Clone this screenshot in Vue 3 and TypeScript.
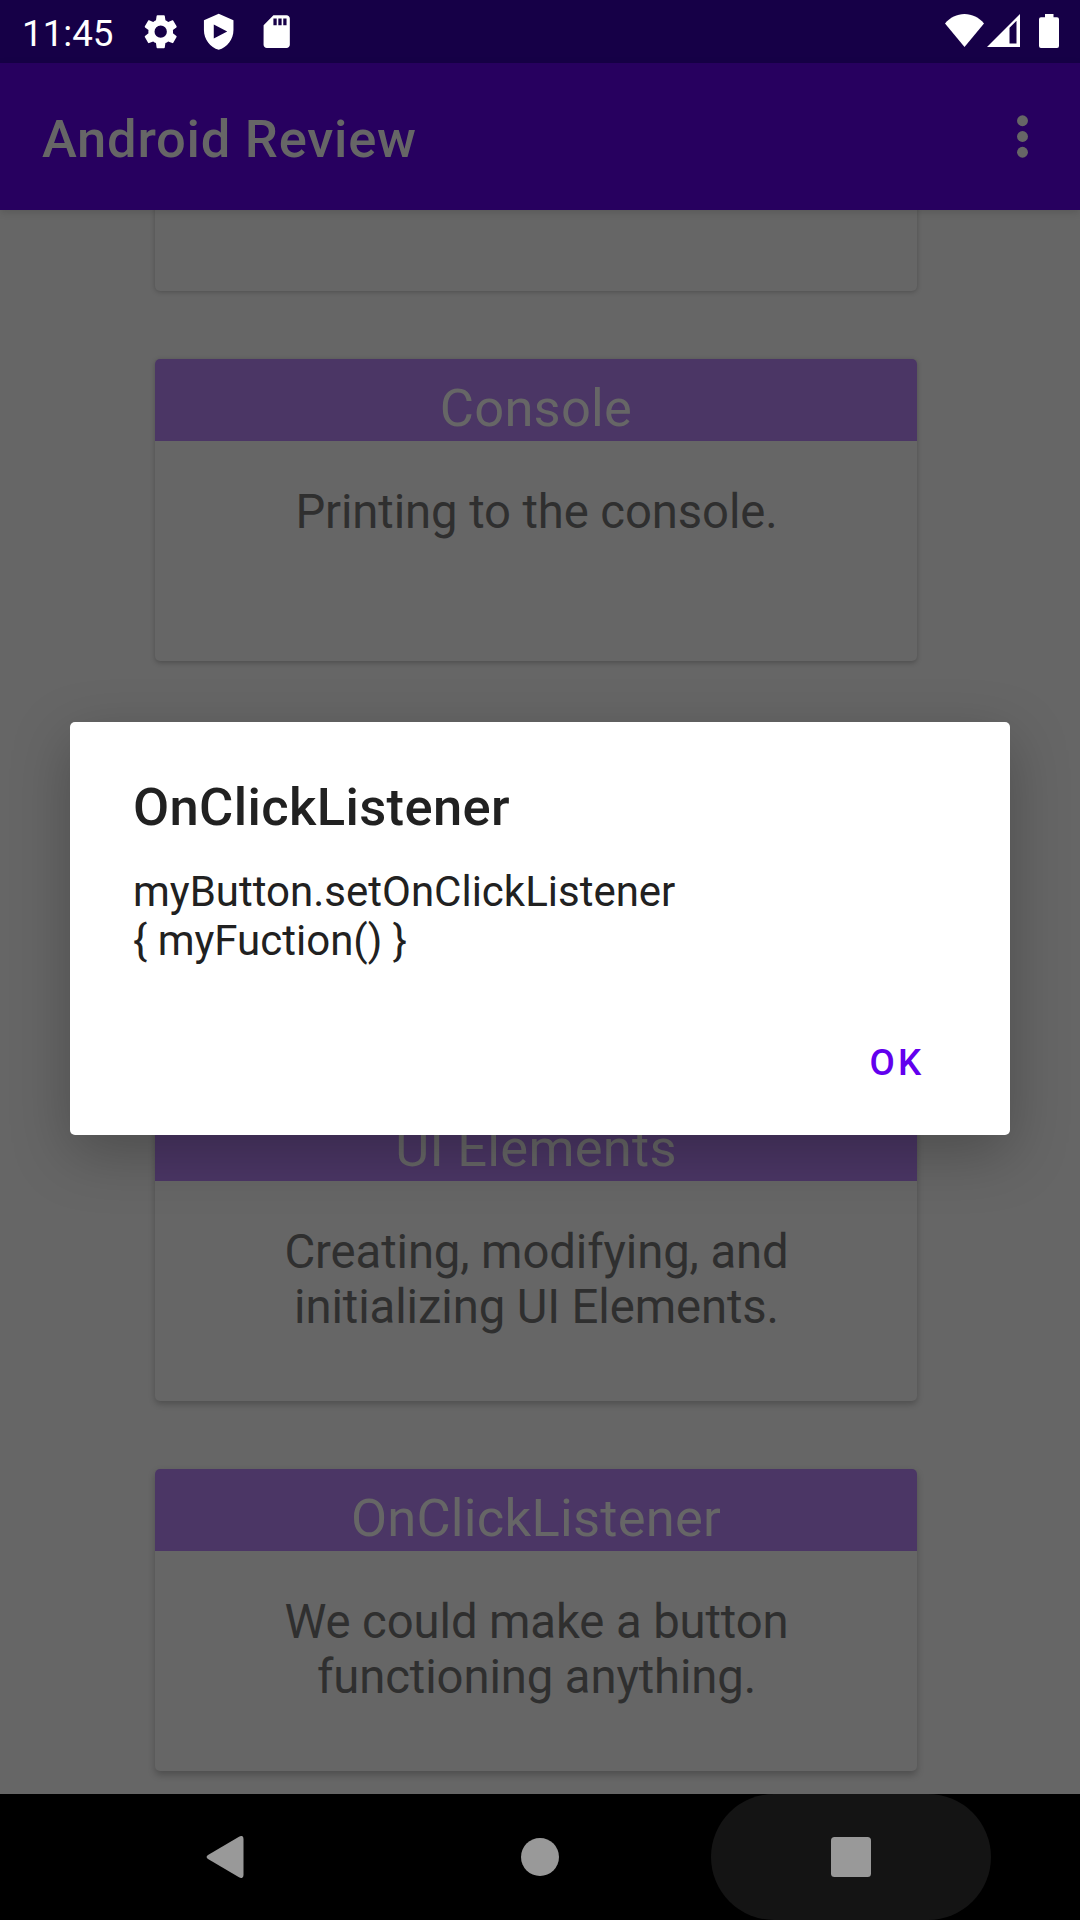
<script setup lang="ts">
interface TopicCard {
  title: string
  lines: string[]
}

const cards: TopicCard[] = [
  { title: '', lines: [] },
  { title: 'Console', lines: ['Printing to the console.'] },
  { title: '', lines: [] },
  { title: 'UI Elements', lines: ['Creating, modifying, and', 'initializing UI Elements.'] },
  { title: 'OnClickListener', lines: ['We could make a button', 'functioning anything.'] },
]

const message: string[] = ['myButton.setOnClickListener', '{ myFuction() }']
</script>

<template>
  <div class="screen">
    <header class="status">
      <span class="clock">11:45</span>
      <svg class="tray" viewBox="0.5 0.5 23 23"><path d="M19.14 12.94c.04-.3.06-.61.06-.94 0-.32-.02-.64-.07-.94l2.03-1.58c.18-.14.23-.41.12-.61l-1.92-3.32c-.12-.22-.37-.29-.59-.22l-2.39.96c-.5-.38-1.03-.7-1.62-.94l-.36-2.54c-.04-.24-.24-.41-.48-.41h-3.84c-.24 0-.43.17-.47.41l-.36 2.54c-.59.24-1.13.57-1.62.94l-2.39-.96c-.22-.08-.47 0-.59.22L2.74 8.87c-.12.21-.08.47.12.61l2.03 1.58c-.05.3-.09.63-.09.94s.02.64.07.94l-2.03 1.58c-.18.14-.23.41-.12.61l1.92 3.32c.12.22.37.29.59.22l2.39-.96c.5.38 1.03.7 1.62.94l.36 2.54c.05.24.24.41.48.41h3.84c.24 0 .44-.17.47-.41l.36-2.54c.59-.24 1.13-.56 1.62-.94l2.39.96c.22.08.47 0 .59-.22l1.92-3.32c.12-.22.07-.47-.12-.61l-2.01-1.58zM12 15.6a3.6 3.6 0 1 1 0-7.2 3.6 3.6 0 0 1 0 7.2z" /></svg>
      <svg class="tray" viewBox="0 0 24 24"><path fill-rule="evenodd" d="M12 1 3 5v6c0 5.55 3.84 10.74 9 12 5.16-1.26 9-6.45 9-12V5zM9 7.6v8.6l8.2-4.3z" /></svg>
      <svg class="tray" viewBox="0 0 24 24"><path fill-rule="evenodd" d="M18 2h-8L4.02 8 4 20c0 1.1.9 2 2 2h12c1.1 0 2-.9 2-2V4c0-1.1-.9-2-2-2zM10 4h2v4h-2zM13 4h2v4h-2zM16 4h2v4h-2z" /></svg>
      <span class="spacer" />
      <svg class="wifi" viewBox="0 0 39 33"><path d="M0 9.5C5 3.5 12 0 19.5 0S34 3.5 39 9.5L19.5 33z" /></svg>
      <svg class="signal" viewBox="0 0 33 33"><path fill-rule="evenodd" d="M33 0v33H0zM22.5 13.8V29.5h7V6.8z" /></svg>
      <svg class="battery" viewBox="0 0 20 34"><path d="M6 0h8.5v3.2H18a2 2 0 0 1 2 2V32a2 2 0 0 1-2 2H2a2 2 0 0 1-2-2V5.2a2 2 0 0 1 2-2h4z" /></svg>
    </header>

    <div class="appbar">
      <h1>Android Review</h1>
      <svg class="more" viewBox="0 0 24 24"><circle cx="12" cy="6" r="2.08" /><circle cx="12" cy="12" r="2.08" /><circle cx="12" cy="18" r="2.08" /></svg>
    </div>

    <main class="list">
      <article v-for="(card, i) in cards" :key="i" class="card" :style="{ '--drop': i }">
        <h2>{{ card.title }}</h2>
        <p><span v-for="line in card.lines" :key="line">{{ line }}</span></p>
      </article>
    </main>

    <nav class="navbar">
      <div class="key back"><svg width="38" height="42" viewBox="0 0 38 42"><path d="M33 .7Q37.5-1.5 37.5 3V39Q37.5 43.5 33 41.3L2 23Q-.8 21 2 19z" /></svg></div>
      <div class="key"><svg width="38" height="38" viewBox="0 0 38 38"><circle cx="19" cy="19" r="19" /></svg></div>
      <div class="key pressed"><svg width="40" height="40" viewBox="0 0 40 40"><rect width="40" height="40" rx="3.5" /></svg></div>
    </nav>

    <section class="dialog">
      <h3>OnClickListener</h3>
      <p><span v-for="line in message" :key="line">{{ line }}</span></p>
      <button type="button">OK</button>
    </section>
  </div>
</template>

<style>
body {
  margin: 0;
}
</style>

<style scoped>
.screen {
  position: relative;
  width: 1080px;
  height: 1920px;
  display: flex;
  flex-direction: column;
  overflow: hidden;
  background: #666;
  font-family: Roboto, sans-serif;
}
h1,
h2,
h3,
p {
  margin: 0;
  white-space: pre;
}
p span {
  display: block;
}
.status {
  box-sizing: border-box;
  height: 63px;
  flex: none;
  display: flex;
  align-items: center;
  padding: 0 21px 0 22px;
  background: #160047;
  color: #fff;
  fill: #fff;
}
.clock {
  width: 119px;
  font-size: 36.75px;
  line-height: 43px;
  padding-top: 4px;
}
.tray {
  width: 39.4px;
  height: 39.4px;
  margin-right: 18.6px;
}
.spacer {
  flex: 1;
}
.wifi {
  width: 39px;
  height: 33px;
  margin-bottom: 2px;
}
.signal {
  width: 33px;
  height: 33px;
  margin: 0 19px 2px 3px;
}
.battery {
  width: 20px;
  height: 34px;
  margin-bottom: 1px;
}
.appbar {
  position: relative;
  z-index: 1;
  box-sizing: border-box;
  height: 147px;
  flex: none;
  display: flex;
  align-items: center;
  justify-content: space-between;
  padding: 0 26px 0 42px;
  background: #27005f;
  box-shadow: 0 2px 8px rgba(0, 0, 0, 0.14);
}
h1 {
  font-size: 52.5px;
  font-weight: 500;
  line-height: 62px;
  padding-top: 5px;
  letter-spacing: 0.0143em;
  color: #666;
}
.more {
  width: 63px;
  height: 63px;
  fill: #666;
}
.list {
  flex: 1;
  min-height: 0;
  overflow: hidden;
  display: flex;
  flex-direction: column;
  gap: 68px;
  padding-left: 155px;
}
.card {
  width: 762px;
  height: 302px;
  flex: none;
  border-radius: 5px;
  background: #666;
  box-shadow: 0 calc(0.5px + var(--drop) * 0.7px) calc(5px + var(--drop) * 0.5px) rgba(0, 0, 0, 0.23);
  text-align: center;
}
.card:first-child {
  margin-top: -221px;
}
h2 {
  box-sizing: border-box;
  height: 82px;
  padding-top: 18px;
  border-radius: 5px 5px 0 0;
  background: #4b3665;
  color: #666;
  font-size: 52.5px;
  font-weight: 400;
  line-height: 62px;
  letter-spacing: 0.0045em;
}
.card p {
  padding: 44px 0 0 1px;
  font-size: 47.25px;
  line-height: 55px;
  letter-spacing: -0.0022em;
  color: #2f2f2f;
}
.navbar {
  height: 126px;
  flex: none;
  display: flex;
  justify-content: center;
  gap: 31px;
  background: #000;
  fill: #999;
}
.key {
  box-sizing: border-box;
  width: 280px;
  display: flex;
  align-items: center;
  justify-content: center;
}
.back {
  padding-right: 8px;
}
.pressed {
  border-radius: 63px;
  background: #141414;
}
.dialog {
  position: absolute;
  left: 70px;
  top: 722px;
  z-index: 2;
  box-sizing: border-box;
  width: 940px;
  height: 413px;
  padding: 54px 63px 0;
  border-radius: 5px;
  background: #fff;
  box-shadow: 0 18px 58px rgba(0, 0, 0, 0.25);
  color: #212121;
}
h3 {
  font-size: 52.5px;
  font-weight: 500;
  line-height: 62px;
  letter-spacing: 0.0069em;
}
.dialog p {
  margin-top: 29px;
  font-size: 42px;
  line-height: 49px;
}
button {
  display: block;
  margin: 76px 22.5px 0 auto;
  padding: 0;
  border: 0;
  background: none;
  color: #6200ee;
  font: 500 36.75px/43px Roboto, sans-serif;
  letter-spacing: 0.0893em;
}
</style>
